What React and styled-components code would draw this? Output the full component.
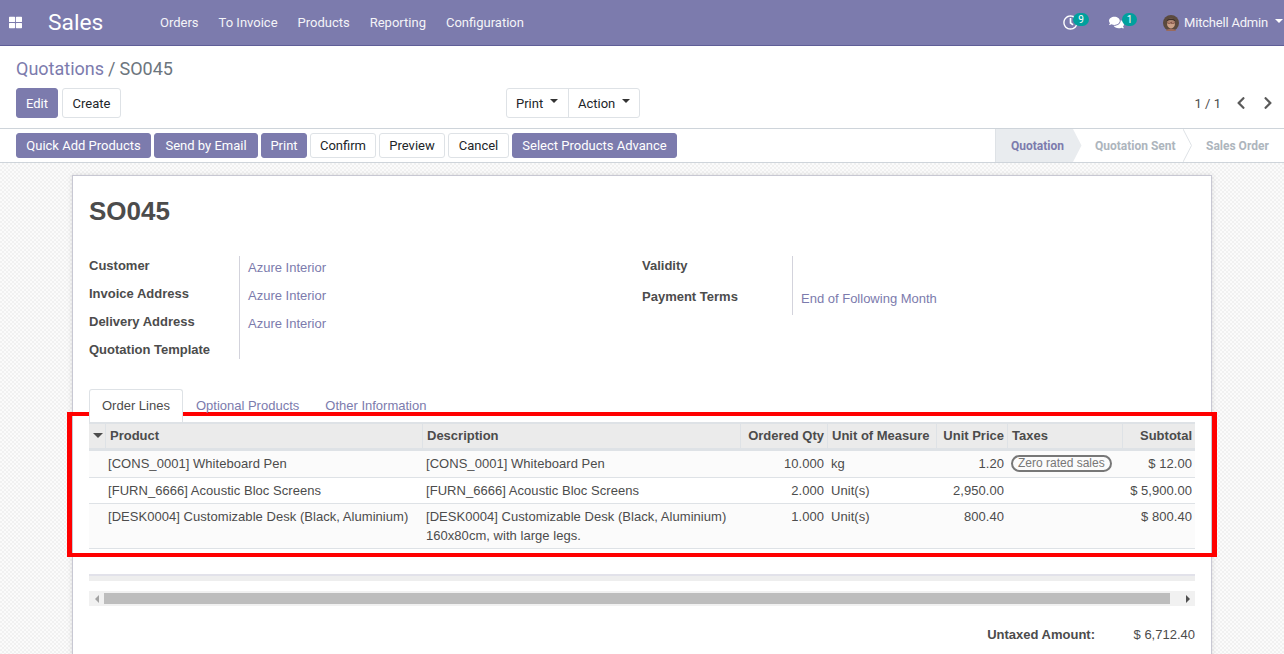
import React from 'react';
import styled, { createGlobalStyle } from 'styled-components';
import { FaThLarge, FaRegClock, FaComments, FaChevronLeft, FaChevronRight } from 'react-icons/fa';

const menuItems = ['Orders', 'To Invoice', 'Products', 'Reporting', 'Configuration'];

const orderLines = [
  {
    product: '[CONS_0001] Whiteboard Pen',
    description: ['[CONS_0001] Whiteboard Pen'],
    qty: '10.000',
    uom: 'kg',
    price: '1.20',
    tax: 'Zero rated sales',
    subtotal: '$ 12.00',
  },
  {
    product: '[FURN_6666] Acoustic Bloc Screens',
    description: ['[FURN_6666] Acoustic Bloc Screens'],
    qty: '2.000',
    uom: 'Unit(s)',
    price: '2,950.00',
    subtotal: '$ 5,900.00',
  },
  {
    product: '[DESK0004] Customizable Desk (Black, Aluminium)',
    description: ['[DESK0004] Customizable Desk (Black, Aluminium)', '160x80cm, with large legs.'],
    qty: '1.000',
    uom: 'Unit(s)',
    price: '800.40',
    subtotal: '$ 800.40',
  },
];

const App = () => {
  return (
    <Page>
      <GlobalStyle />
      <Navbar>
        <AppsIcon><FaThLarge /></AppsIcon>
        <Brand>Sales</Brand>
        <Menu>
          {menuItems.map((item) => (
            <MenuItem key={item}>{item}</MenuItem>
          ))}
        </Menu>
        <Systray>
          <TrayIcon>
            <FaRegClock />
            <Badge>9</Badge>
          </TrayIcon>
          <TrayIcon $wide>
            <FaComments />
            <Badge $wide>1</Badge>
          </TrayIcon>
          <UserMenu>
            <Avatar viewBox="0 0 16 16">
              <circle cx="8" cy="8" r="8" fill="#5b4a3e" />
              <ellipse cx="8" cy="8.5" rx="4" ry="5" fill="#c9a088" />
              <path d="M3.5 6.5C4 2.5 12 2.5 12.500 6.5 10 4.800 6 4.800 3.500 6.500z" fill="#3e2f28" />
              <rect x="4.800" y="7" width="2.800" height="1.600" fill="none" stroke="#6b3b32" strokeWidth=".6" />
              <rect x="8.400" y="7" width="2.800" height="1.600" fill="none" stroke="#6b3b32" strokeWidth=".6" />
              <path d="M3 16c.5-3 9.500-3 10 0z" fill="#9a6a5c" />
            </Avatar>
            <UserName>Mitchell Admin</UserName>
            <Caret $light />
          </UserMenu>
        </Systray>
      </Navbar>

      <ControlPanel>
        <Breadcrumb>
          <CrumbLink>Quotations</CrumbLink>
          <CrumbSep>/</CrumbSep>
          <span>SO045</span>
        </Breadcrumb>
        <PanelRow>
          <ButtonRow>
            <Button $primary $width={42}>Edit</Button>
            <Button $width={59}>Create</Button>
          </ButtonRow>
          <ButtonGroup>
            <GroupButton $width={61}>Print<Caret /></GroupButton>
            <GroupButton $width={71}>Action<Caret /></GroupButton>
          </ButtonGroup>
          <Pager>
            <PagerCount>1 / 1</PagerCount>
            <PagerArrow><FaChevronLeft /></PagerArrow>
            <PagerArrow><FaChevronRight /></PagerArrow>
          </Pager>
        </PanelRow>
      </ControlPanel>

      <StatusBar>
        <StatusButtons>
          <Button $primary $width={135}>Quick Add Products</Button>
          <Button $primary $width={104}>Send by Email</Button>
          <Button $primary $width={46}>Print</Button>
          <Button $width={66}>Confirm</Button>
          <Button $width={66}>Preview</Button>
          <Button $width={61}>Cancel</Button>
          <Button $primary $width={165}>Select Products Advance</Button>
        </StatusButtons>
        <Stages>
          <Stage $active $width={78} $pad={15}>Quotation<StageArrow $active /></Stage>
          <Stage $width={110} $pad={22}>Quotation Sent<StageArrow /></Stage>
          <Stage $width={101} $pad={23}>Sales Order</Stage>
        </Stages>
      </StatusBar>

      <Content>
        <Sheet>
          <Title>SO045</Title>
          <FormGroups>
            <FormGroup $height={103}>
              <LabelColumn>
                <FieldLabel>Customer</FieldLabel>
                <FieldLabel>Invoice Address</FieldLabel>
                <FieldLabel>Delivery Address</FieldLabel>
                <FieldLabel>Quotation Template</FieldLabel>
              </LabelColumn>
              <ValueColumn>
                <FieldValue>Azure Interior</FieldValue>
                <FieldValue>Azure Interior</FieldValue>
                <FieldValue>Azure Interior</FieldValue>
              </ValueColumn>
            </FormGroup>
            <FormGroup $height={59}>
              <LabelColumn>
                <FieldLabel $tall>Validity</FieldLabel>
                <FieldLabel>Payment Terms</FieldLabel>
              </LabelColumn>
              <ValueColumn>
                <FieldValue $tall />
                <FieldValue>End of Following Month</FieldValue>
              </ValueColumn>
            </FormGroup>
          </FormGroups>

          <Tabs>
            <Tab $active>Order Lines</Tab>
            <Tab>Optional Products</Tab>
            <Tab>Other Information</Tab>
          </Tabs>

          <LinesTable>
            <colgroup>
              <col width="16" />
              <col width="317" />
              <col width="318" />
              <col width="87" />
              <col width="109" />
              <col width="71" />
              <col width="115" />
              <col width="73" />
            </colgroup>
            <thead>
              <tr>
                <HeadCell><SortCaret /></HeadCell>
                <HeadCell>Product</HeadCell>
                <HeadCell>Description</HeadCell>
                <HeadCell $right>Ordered Qty</HeadCell>
                <HeadCell>Unit of Measure</HeadCell>
                <HeadCell $right>Unit Price</HeadCell>
                <HeadCell>Taxes</HeadCell>
                <HeadCell $right>Subtotal</HeadCell>
              </tr>
            </thead>
            <tbody>
              {orderLines.map((line) => (
                <LineRow key={line.product}>
                  <Cell />
                  <Cell>{line.product}</Cell>
                  <Cell>
                    {line.description.map((text) => (
                      <div key={text}>{text}</div>
                    ))}
                  </Cell>
                  <Cell $right>{line.qty}</Cell>
                  <Cell>{line.uom}</Cell>
                  <Cell $right>{line.price}</Cell>
                  <Cell>{line.tax && <TaxTag>{line.tax}</TaxTag>}</Cell>
                  <Cell $right>{line.subtotal}</Cell>
                </LineRow>
              ))}
            </tbody>
          </LinesTable>

          <TableFoot />

          <ScrollBar>
            <ScrollButton><ScrollArrow $left /></ScrollButton>
            <ScrollThumb />
            <ScrollButton $end><ScrollArrow /></ScrollButton>
          </ScrollBar>

          <Totals>
            <TotalLabel>Untaxed Amount:</TotalLabel>
            <TotalValue>$ 6,712.40</TotalValue>
          </Totals>
        </Sheet>
        <Highlight />
      </Content>
    </Page>
  );
};

export default App;

const GlobalStyle = createGlobalStyle`
  html, body {
    margin: 0;
    padding: 0;
    height: 100%;
    overflow: hidden;
    background: #fff;
  }
  * {
    box-sizing: border-box;
  }
`;

const Page = styled.div`
  width: 1284px;
  height: 654px;
  display: flex;
  flex-direction: column;
  overflow: hidden;
  font-family: Roboto, "Liberation Sans", sans-serif;
  font-size: 13px;
  color: #4c4c4c;
`;

const Navbar = styled.header`
  flex: 0 0 46px;
  display: flex;
  align-items: center;
  background-color: #7c7bad;
  border-bottom: 1px solid #5f5e97;
  color: #fff;
`;

const AppsIcon = styled.span`
  width: 32px;
  padding-left: 9px;
  display: flex;
  font-size: 13px;
`;

const Brand = styled.span`
  font-size: 22.750px;
  margin-left: 16px;
  width: 112px;
`;

const Menu = styled.nav`
  display: flex;
  gap: 20px;
`;

const MenuItem = styled.span`
  font-size: 13px;
  color: #f4f4f8;
`;

const Systray = styled.div`
  margin-left: auto;
  display: flex;
  align-items: center;
  height: 100%;
`;

const TrayIcon = styled.span`
  position: relative;
  display: flex;
  width: ${(props) => (props.$wide ? '54px' : '46px')};
  font-size: 15px;
`;

const Badge = styled.span`
  position: absolute;
  left: ${(props) => (props.$wide ? '13px' : '10px')};
  top: -2px;
  width: ${(props) => (props.$wide ? '15px' : '16px')};
  height: 13px;
  border-radius: 7px;
  background-color: #00a09d;
  color: #fff;
  font-size: 10px;
  line-height: 13px;
  text-align: center;
`;

const UserMenu = styled.span`
  display: flex;
  align-items: center;
  padding-right: 1px;
  color: #f4f4f8;
`;

const UserName = styled.span`
  letter-spacing: -0.2px;
`;

const Avatar = styled.svg`
  width: 16px;
  height: 16px;
  margin-right: 5px;
`;

const Caret = styled.i`
  display: inline-block;
  margin-left: 7px;
  border-top: 4px solid ${(props) => (props.$light ? '#fff' : '#333')};
  border-left: 4px solid transparent;
  border-right: 4px solid transparent;
  transform: translateY(-2px);
`;

const ControlPanel = styled.section`
  flex: 0 0 83px;
  padding: 11px 16px 0;
  background-color: #fff;
  border-bottom: 1px solid #ced4da;
`;

const Breadcrumb = styled.div`
  display: flex;
  gap: 4px;
  height: 31px;
  font-size: 18px;
  line-height: 24px;
  color: #6c757d;
`;

const CrumbLink = styled.span`
  color: #7c7bad;
`;

const CrumbSep = styled.span`
  color: #6c757d;
`;

const PanelRow = styled.div`
  display: grid;
  grid-template-columns: 490px 1fr 200px;
  align-items: center;
`;

const ButtonRow = styled.div`
  display: flex;
  gap: 4px;
`;

const Button = styled.button`
  width: ${(props) => props.$width}px;
  height: 25px;
  padding: 0;
  border: 1px solid ${(props) => (props.$primary ? '#7c7bad' : '#dee2e6')};
  border-radius: 3px;
  background-color: ${(props) => (props.$primary ? '#7c7bad' : '#fff')};
  color: ${(props) => (props.$primary ? '#fff' : '#212529')};
  font-family: inherit;
  font-size: 13px;
  line-height: 1;
  white-space: nowrap;
  ${ButtonRow} & {
    height: 30px;
  }
`;

const ButtonGroup = styled.div`
  display: flex;
  width: 134px;
  height: 30px;
  border: 1px solid #dee2e6;
  border-radius: 3px;
`;

const GroupButton = styled.span`
  display: flex;
  align-items: center;
  width: ${(props) => props.$width}px;
  padding-left: 9px;
  color: #212529;
  & + & {
    border-left: 1px solid #dee2e6;
  }
`;

const Pager = styled.div`
  display: flex;
  align-items: center;
  justify-content: flex-end;
  margin-right: -13px;
`;

const PagerCount = styled.span`
  margin-right: 6px;
  color: #4c4c4c;
`;

const PagerArrow = styled.span`
  display: flex;
  width: 27px;
  justify-content: center;
  color: #5a5a5a;
  font-size: 14px;
`;

const StatusBar = styled.section`
  flex: 0 0 34px;
  display: flex;
  justify-content: space-between;
  background-color: #fff;
  border-bottom: 1px solid #ced4da;
`;

const StatusButtons = styled.div`
  display: flex;
  align-items: center;
  gap: 3px;
  padding-left: 16px;
`;

const Stages = styled.div`
  display: flex;
`;

const Stage = styled.span`
  position: relative;
  width: ${(props) => props.$width}px;
  display: flex;
  align-items: center;
  padding-left: ${(props) => props.$pad}px;
  background-color: ${(props) => (props.$active ? '#e9ecef' : '#fff')};
  color: ${(props) => (props.$active ? '#7c7bad' : '#adb5bd')};
  border-left: ${(props) => (props.$active ? '1px solid #dee2e6' : 'none')};
  font-size: 12px;
  font-weight: 700;
  white-space: nowrap;
`;

const StageArrow = styled.svg.attrs((props) => ({
  viewBox: '0 0 9 33',
  preserveAspectRatio: 'none',
  children: (
    <path
      d="M0 0 L8.500 16.500 L0 33"
      fill={props.$active ? '#e9ecef' : '#fff'}
      stroke={props.$active ? 'none' : '#dee2e6'}
    />
  ),
}))`
  position: absolute;
  right: -9px;
  top: 0;
  width: 9px;
  height: 33px;
  z-index: 1;
`;

const Content = styled.main`
  position: relative;
  flex: 1;
  min-height: 0;
  padding: 12px 72px 0;
  background-color: #fbfbfb;
  background-image:
    linear-gradient(45deg, #f1f1f1 25%, transparent 25%, transparent 75%, #f1f1f1 75%),
    linear-gradient(45deg, #f1f1f1 25%, transparent 25%, transparent 75%, #f1f1f1 75%);
  background-size: 4px 4px;
  background-position: 0 0, 2px 2px;
`;

const Sheet = styled.div`
  height: 600px;
  padding: 17px 16px 0;
  background-color: #fff;
  border: 1px solid #c8c8d3;
  box-shadow: 0 0 5px rgba(0, 0, 0, 0.12);
  font-family: "Liberation Sans", Arial, sans-serif;
`;

const Title = styled.h1`
  margin: 0;
  height: 49px;
  font-size: 26px;
  line-height: 37px;
  font-weight: 700;
  color: #4c4c4c;
`;

const FormGroups = styled.div`
  display: grid;
  grid-template-columns: 553px 1fr;
  align-items: start;
  height: 103px;
  margin-top: 14px;
`;

const FormGroup = styled.div`
  display: flex;
  height: ${(props) => props.$height}px;
`;

const LabelColumn = styled.div`
  width: 150px;
  padding-top: 2px;
`;

const FieldLabel = styled.div`
  height: ${(props) => (props.$tall ? '31px' : '28px')};
  line-height: 16px;
  font-weight: 700;
`;

const ValueColumn = styled.div`
  border-left: 1px solid #d3d3dc;
  padding: 4px 0 0 8px;
  min-width: 100px;
`;

const FieldValue = styled.div`
  height: ${(props) => (props.$tall ? '31px' : '28px')};
  line-height: 16px;
  color: #7c7bad;
`;

const Tabs = styled.div`
  display: flex;
  margin-top: 30px;
  height: 33px;
  position: relative;
  z-index: 1;
`;

const Tab = styled.span`
  height: 33px;
  padding: 8px 12px 0;
  border: 1px solid ${(props) => (props.$active ? '#dee2e6' : 'transparent')};
  border-bottom: none;
  border-radius: 3px 3px 0 0;
  background-color: ${(props) => (props.$active ? '#fff' : 'transparent')};
  color: ${(props) => (props.$active ? '#4c4c4c' : '#7c7bad')};
`;

const LinesTable = styled.table`
  width: 1106px;
  table-layout: fixed;
  border-collapse: separate;
  border-spacing: 0;
`;

const HeadCell = styled.th`
  height: 29px;
  padding: 0 ${(props) => (props.$right ? '3px' : '4px')} 2px 4px;
  background-color: #ebebeb;
  border-top: 2px solid #dee2e6;
  border-bottom: 3px solid #dee2e6;
  border-left: 1px solid #dee2e6;
  text-align: ${(props) => (props.$right ? 'right' : 'left')};
  font-weight: 700;
  white-space: nowrap;
  overflow: hidden;
  &:first-child {
    border-left: none;
  }
`;

const SortCaret = styled.i`
  display: block;
  border-top: 5px solid #4c4c4c;
  border-left: 5px solid transparent;
  border-right: 5px solid transparent;
`;

const LineRow = styled.tr`
  &:nth-child(odd) {
    background-color: #fbfbfb;
  }
`;

const Cell = styled.td`
  padding: 3px ${(props) => (props.$right ? '3px' : '0')} 3px ${(props) => (props.$right ? '0' : '4px')};
  border-bottom: 1px solid #dee2e6;
  line-height: 19px;
  letter-spacing: 0.04px;
  vertical-align: top;
  text-align: ${(props) => (props.$right ? 'right' : 'left')};
  &:nth-child(2) {
    padding-left: 3px;
  }
`;

const TaxTag = styled.span`
  display: inline-block;
  height: 17px;
  margin: 1px 0 2px;
  padding: 0 5px;
  border: 2px solid #777;
  border-radius: 9px;
  line-height: 13px;
  font-size: 12px;
  letter-spacing: 0;
  color: #777;
  vertical-align: top;
`;

const TableFoot = styled.div`
  height: 7px;
  margin-top: 25px;
  background-color: #eee;
  border-top: 2px solid #e2e2ea;
`;

const ScrollBar = styled.div`
  display: flex;
  height: 15px;
  margin-top: 10px;
  background-color: #f1f1f1;
`;

const ScrollButton = styled.span`
  flex: 0 0 ${(props) => (props.$end ? '25px' : '15px')};
  display: flex;
  align-items: center;
  justify-content: ${(props) => (props.$end ? 'flex-end' : 'center')};
  padding-right: ${(props) => (props.$end ? '5px' : '0')};
`;

const ScrollArrow = styled.i`
  border-top: 4px solid transparent;
  border-bottom: 4px solid transparent;
  border-left: ${(props) => (props.$left ? 'none' : '4px solid #505050')};
  border-right: ${(props) => (props.$left ? '4px solid #a3a3a3' : 'none')};
`;

const ScrollThumb = styled.span`
  flex: 1;
  margin: 2px 0;
  background-color: #bdbdbd;
`;

const Totals = styled.div`
  display: flex;
  justify-content: flex-end;
  margin-top: 21px;
  line-height: 16px;
`;

const TotalLabel = styled.span`
  font-weight: 700;
`;

const TotalValue = styled.span`
  width: 100px;
  text-align: right;
`;

const Highlight = styled.div`
  position: absolute;
  left: 67px;
  top: 249px;
  width: 1150px;
  height: 145px;
  border-style: solid;
  border-color: #ff0000;
  border-width: 4px 5px;
  pointer-events: none;
`;
